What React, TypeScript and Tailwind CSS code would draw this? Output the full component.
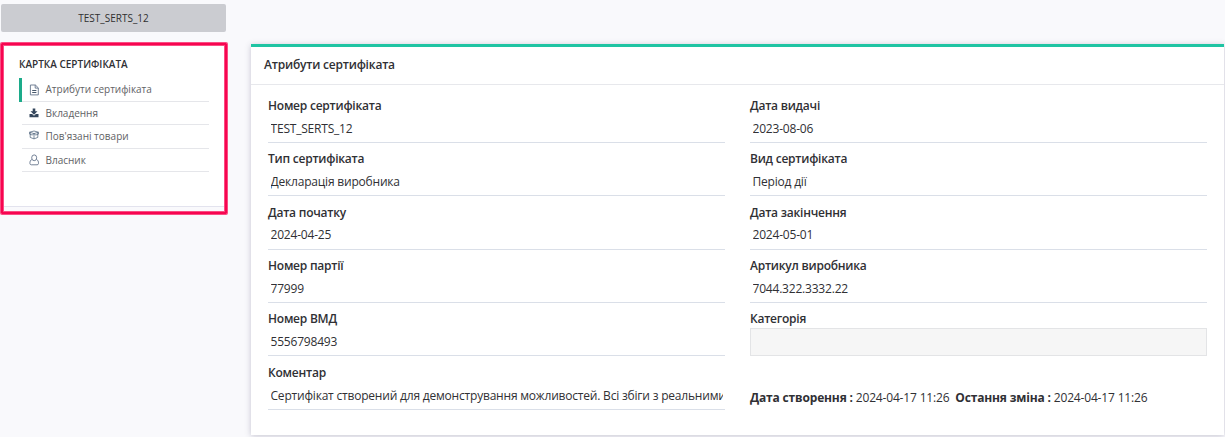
import React from 'react';

type Field = { label: string; value: string };

const leftFields: Field[] = [
  { label: 'Номер сертифіката', value: 'TEST_SERTS_12' },
  { label: 'Тип сертифіката', value: 'Декларація виробника' },
  { label: 'Дата початку', value: '2024-04-25' },
  { label: 'Номер партії', value: '77999' },
  { label: 'Номер ВМД', value: '5556798493' },
  {
    label: 'Коментар',
    value: 'Сертифікат створений для демонстрування можливостей. Всі збіги з реальними',
  },
];

const rightFields: Field[] = [
  { label: 'Дата видачі', value: '2023-08-06' },
  { label: 'Вид сертифіката', value: 'Період дії' },
  { label: 'Дата закінчення', value: '2024-05-01' },
  { label: 'Артикул виробника', value: '7044.322.3332.22' },
];

function FileIcon() {
  return (
    <svg viewBox="0 0 10 12" className="block h-[12px] w-[10px]" fill="none" stroke="#64748b" strokeWidth="0.9">
      <path d="M1.4 1h5l2.9 2.9v7H1.4z" />
      <path d="M6.2 1v3.1h3.1" />
      <path d="M3.2 6.5h4.2M3.2 8.5h4.2" stroke="#34465c" />
    </svg>
  );
}

function DownloadIcon() {
  return (
    <svg viewBox="0 0 10 10" className="block h-[10px] w-[10px]" fill="#34465c">
      <path d="M3.7 0.5h2.6v2.7h2.2L5 6.7 1.5 3.2h2.2z" />
      <path d="M0.5 6.1h2.6L5 7.8l1.9-1.7h2.6v3.2h-9z" />
    </svg>
  );
}

function BoxIcon() {
  return (
    <svg viewBox="0 0 10 10" className="mb-[3px] block h-[10px] w-[10px]" fill="none" stroke="#52677f" strokeWidth="0.75" strokeLinejoin="round">
      <path d="M.6 2.2 5 1l4.4 1.2L5 3.6zM1.2 2.6v4.8L5 8.9l3.8-1.5V2.6M5 3.6v5.3" />
      <path d="M.6 2.2v1.9l2.6.9L5 3.6 6.8 5l2.6-.9V2.2" />
    </svg>
  );
}

function UserIcon() {
  return (
    <svg viewBox="0 0 10 12" className="block h-[12px] w-[10px]" fill="none" stroke="#64748b" strokeWidth="0.9">
      <path d="M2.8 5.6C1.2 6.1.9 7.7.9 9.4c0 .9.6 1.4 1.4 1.4h5.8c.8 0 1.4-.5 1.4-1.4 0-1.7-.3-3.3-1.9-3.8" />
      <ellipse cx="5.2" cy="3.8" rx="2.5" ry="2.9" />
    </svg>
  );
}

const menu = [
  { text: 'Атрибути сертифіката', icon: <FileIcon />, active: true, size: 'h-[24px]' },
  { text: 'Вкладення', icon: <DownloadIcon />, active: false, size: 'h-[23px]' },
  { text: "Пов'язані товари", icon: <BoxIcon />, active: false, size: 'h-[24px]' },
  { text: 'Власник', icon: <UserIcon />, active: false, size: 'h-[23px]' },
];

function FormField({ label, value }: Field) {
  return (
    <div className="h-[53.35px]">
      <div className="h-[22.8px] text-[12px] leading-[18px] font-semibold tracking-[-0.23px]">{label}</div>
      <div className="h-[23.1px] border-b border-[#dadfe8] px-[2.5px]">
        <div className="overflow-hidden text-[12px] leading-[18px] tracking-[-0.2px] whitespace-nowrap">{value}</div>
      </div>
    </div>
  );
}

export default function App() {
  return (
    <div className="flex h-[437px] w-[1225px] overflow-hidden bg-[#f9f9fc] font-['Open_Sans',sans-serif] text-[#303034]">
      <aside className="w-[251px] shrink-0 pt-[4px]">
        <div className="ml-[1px] flex h-[28px] w-[225px] items-center justify-center rounded-[2px] bg-[#cbccd1] text-[10px] text-[#303030]">
          TEST_SERTS_12
        </div>
        <div className="relative mt-[11px] ml-[1px] h-[164px] w-[225px] border-b border-[#e3e3ee] bg-white pt-[14px] pl-[18px]">
          <h2 className="h-[21px] text-[10px] leading-[14px] font-semibold">КАРТКА СЕРТИФІКАТА</h2>
          <ul className="w-[190px]">
            {menu.map((item) => (
              <li key={item.text} className={`flex ${item.size}`}>
                <div className={`w-[3px] shrink-0 ${item.active ? 'bg-[#1cab8a]' : ''}`} />
                <div className="flex flex-1 items-center border-b border-[#e5e6ea] pl-[7px] text-[10px] text-[#5f6265]">
                  <span className="mr-[6.5px]">{item.icon}</span>
                  {item.text}
                </div>
              </li>
            ))}
          </ul>
          <div className="absolute top-0 left-0 h-[171px] w-[226px] rounded-[1px] border-2 border-[#f70550] shadow-[0_0_0_1px_#fa4d83,inset_0_0_0_1px_#fa4d83]" />
        </div>
      </aside>

      <main className="mt-[44px] h-[391px] w-[973px] shrink-0 border-t-[3px] border-[#1fc4a3] bg-white shadow-[0_1px_6px_rgba(69,65,100,0.28)]">
        <h1 className="h-[38px] border-b border-[#e7e8ec] pt-[9px] pl-[13px] text-[12px] leading-[18px] font-semibold tracking-[-0.2px]">
          Атрибути сертифіката
        </h1>
        <div className="flex gap-[25px] pt-[12px] pl-[17px]">
          <div className="w-[457px]">
            {leftFields.map((f) => (
              <FormField key={f.label} {...f} />
            ))}
          </div>
          <div className="w-[457px]">
            {rightFields.map((f) => (
              <FormField key={f.label} {...f} />
            ))}
            <div className="text-[12px] leading-[18px] font-semibold tracking-[-0.23px]">Категорія</div>
            <div className="h-[28px] border border-[#e3e4e6] bg-[#f6f6f6]" />
            <div className="mt-[33px] text-[12px] leading-[18px] tracking-[-0.165px] whitespace-nowrap">
              <b>Дата створення :</b> 2024-04-17 11:26&nbsp; <b>Остання зміна :</b> 2024-04-17 11:26
            </div>
          </div>
        </div>
      </main>
    </div>
  );
}
